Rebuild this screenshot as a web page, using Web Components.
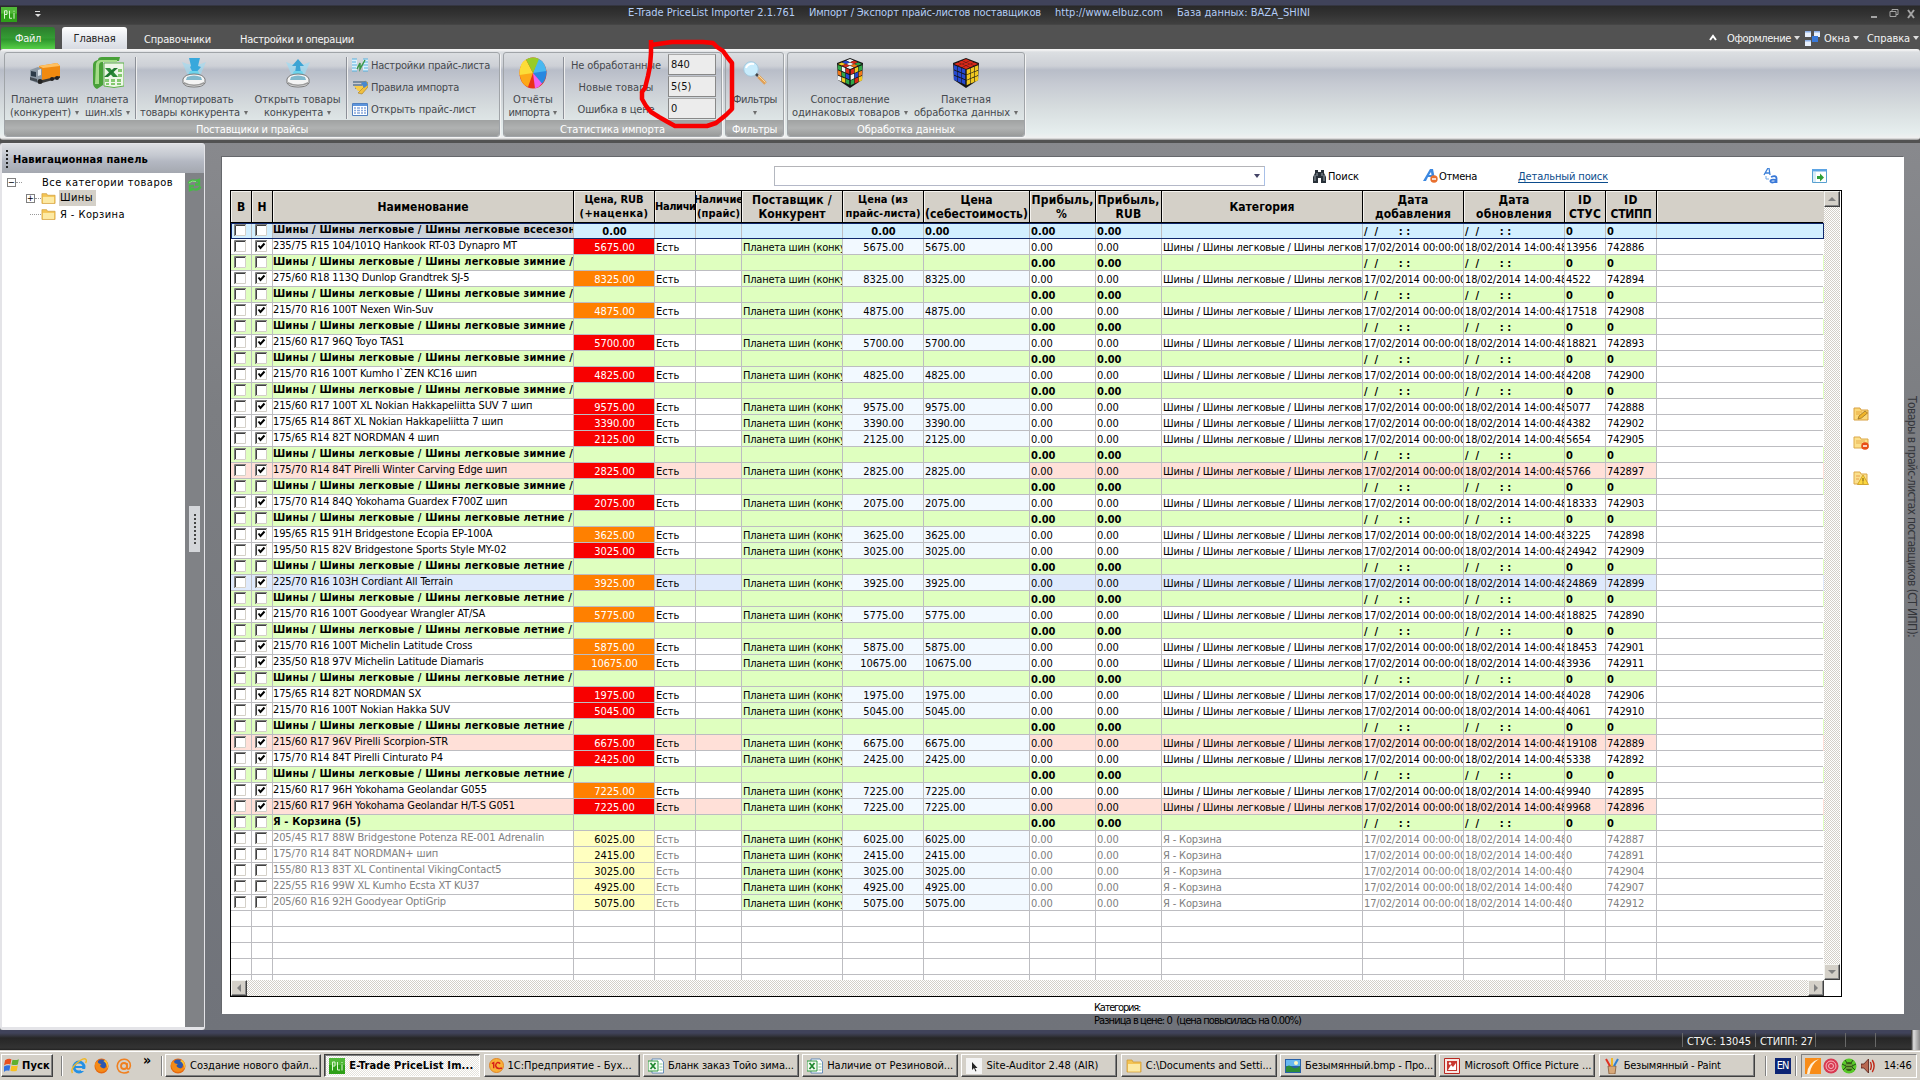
<!DOCTYPE html>
<html lang="ru">
<head>
<meta charset="utf-8">
<title>E-Trade PriceList Importer</title>
<style>
  html, body { margin: 0; height: 100%; overflow: hidden; }
  body {
    font: 11px/13px "DejaVu Sans Condensed", "DejaVu Sans", sans-serif;
    font-stretch: condensed;
    color: #000;
    background: #828488;
  }
</style>
</head>
<body>
<importer-app></importer-app>
<script>
{
  const define = (name, html, setup) => {
    const template = document.createElement('template');
    template.innerHTML = html;
    customElements.define(name, class extends HTMLElement {
      constructor() {
        super();
        this.attachShadow({mode: 'open'});
      }

      connectedCallback() {
        if (this.ready) return;
        this.ready = true;
        if (setup) setup.call(this, template);
        else this.shadowRoot.append(template.content.cloneNode(true));
      }
    });
  };

  // text with an exact width, the difference goes to the letter spacing
  class FitText extends HTMLElement {
    constructor() {
      super();
      this.attachShadow({mode: 'open'});
      this.shadowRoot.innerHTML = `
        <style>:host { display: inline-block; white-space: pre; flex: none; }</style>
        <slot></slot>
      `.trim().replace(/>\s+</g, '><');
    }

    connectedCallback() {
      const w = Number(this.getAttribute('w'));
      const n = this.textContent.length;
      if (!w || !n) return;
      this.style.letterSpacing = '0px';
      const natural = this.getBoundingClientRect().width;
      this.style.letterSpacing = `${((w - natural) / n).toFixed(3)}px`;
    }
  }

  const cube = (faces) => {
    const [top, left, right] = faces;
    let out = '<path d="M14 0L27 5 26 22 14 30 2 22 1 5Z" fill="#151515"/>';
    for (let i = 0; i < 3; i++) {
      for (let j = 0; j < 3; j++) {
        const k = i * 3 + j;
        const tx = 14 + (j - i) * 4.1, ty = 1 + (i + j) * 1.7;
        out += `<path d="M${tx} ${ty}l3.800 1.600-3.800 1.600-3.800-1.600z" fill="${top[k]}"/>`;
        const lx = 1.8 + j * 4, ly = 7 + i * 5.3 + j * 1.6;
        out += `<path d="M${lx} ${ly}l3.500 1.400v4.500l-3.500-1.700z" fill="${left[k]}"/>`;
        const rx = 14.7 + j * 4, ry = 11.8 + i * 5.3 - j * 1.6;
        out += `<path d="M${rx} ${ry}l3.500-1.400v4.500l-3.500 1.700z" fill="${right[k]}"/>`;
      }
    }
    return out;
  };

  const fill = (c) => Array(9).fill(c);
  const R = '#d82818', B = '#2448d0', Y = '#f0c820', G = '#30a848', O = '#f07818', W = '#f0f4f4';
  const folder = '<path d="M1 2h5l1 2h8v10H1z" fill="#f4c454" stroke="#d09c38" stroke-width=".8"/><path d="M2 6h12v7.500H2z" fill="#fdeaa4"/>';
  const excel = '<path d="M4 1h9l2.500 3v11H4z" fill="#fff" stroke="#4878b0" stroke-width=".8"/><path d="M0 3h10v10H0z" fill="#f4fcf0" stroke="#2f9a40"/><path d="M2.500 5l5 6M7.500 5l-5 6" stroke="#208830" stroke-width="1.800"/><path d="M11.500 6h3M11.500 9h3M11.500 12h3" stroke="#8cc890"/>';
  const firefox = '<circle cx="8" cy="8" r="7.500" fill="#e66a10"/><circle cx="8" cy="6.500" r="5" fill="#2c58b0"/><path d="M1 5c0 6 3 9 7 9 4 0 7-3 7-7-1 3-4 4-6 3-3-1-3-3-1-4-3 0-4-1-4-3z" fill="#f58a18"/><path d="M12 2c3 2 4 6 2 9 0-4-1-6-4-8z" fill="#fbc030"/>';
  const pli = '<path d="M0 0h16v16H0z" fill="#2ea018"/><path d="M0 0h16v7H0z" fill="#50b838"/><path d="M3.500 12.500V4H6v4H3.500M8.500 4v8h2.500M13 6.500v6M13 4v1" stroke="#e0f8d8" fill="none"/>';

  const ICONS = {
    pli: [16, 16, pli],
    excel: [16, 16, excel],
    firefox: [16, 16, firefox],
    folder: [16, 16, folder],
    truck: [32, 24, '<path d="M10 5L28 2l3 3v11l-18 4z" fill="#f08a10"/><path d="M10 5l18-3 3 3-17 2z" fill="#ffc060"/><path d="M1 9l8-3 4 2v12l-5 2-7-3z" fill="#8c98a4"/><path d="M2 10l5 1v5l-5-1z" fill="#2c3a48"/><path d="M9 9l3-1v6l-3 1z" fill="#dde4ea"/><path d="M1 16l7 2v3l-7-2z" fill="#444c54"/><path d="M13 19l18-4v2l-18 5z" fill="#383838"/><circle cx="11" cy="20.500" r="2.500" fill="#222"/><circle cx="23" cy="18" r="2" fill="#222"/><circle cx="28" cy="17" r="2" fill="#222"/>'],
    xls: [32, 32, '<path d="M6 3q0-3 4-3h18l-1 4H11v24l-6 4q-4-2-4-6V8q0-4 5-5z" fill="#48a038"/><path d="M4 7q1-4 5-4h16v2H10q-3 0-3 4v18H3z" fill="#a4dc88"/><path d="M12 6h20v23q-10 3-20 0z" fill="#eef6e8" stroke="#5cb048"/><path d="M13 11h5l8 9h-5z" fill="#2c8a38"/><path d="M22 11h4L16 20h-4z" fill="#207830"/><path d="M13 22h4v3h-4zm6 0h4v3h-4zm6 0h4v3h-4zM14 26h3v2h-3zm5 0h4v2h-4zm6 0h4v2h-4zM26 12h4v3h-4zm0 5h4v3h-4z" fill="#84c870"/>'],
    import: [24, 30, '<path d="M0 4q12 6 24 0L18 18H6z" fill="#9cdcf4" opacity=".6"/><path d="M7 0h11l-2 8 3 1-7 8-4-8 1-1z" fill="#38a8dc"/><path d="M8 13h8l3 6H5z" fill="#6cd4ec"/><path d="M1 21q2-5 11-5t11 5v4q-2 4-11 4T1 25z" fill="#f4f4f4" stroke="#787878"/><path d="M5 19q7-3 14 0l1 3H4z" fill="#80b8cc"/><path d="M2 24q10 5 20 0v2q-10 4-20 0z" fill="#9c9c9c"/>'],
    export: [24, 30, '<path d="M0 4q12 6 24 0L18 18H6z" fill="#9cdcf4" opacity=".7"/><path d="M12 1l6 7h-4l1 7H9l1-7H6z" fill="#3ca4d4"/><path d="M8 13h8l3 6H5z" fill="#6cd4ec"/><path d="M1 21q2-5 11-5t11 5v4q-2 4-11 4T1 25z" fill="#f4f4f4" stroke="#787878"/><path d="M5 19q7-3 14 0l1 3H4z" fill="#80b8cc"/><path d="M2 24q10 5 20 0v2q-10 4-20 0z" fill="#9c9c9c"/>'],
    settings: [16, 16, '<path d="M0 2h5v12H0zM11 2h5v12h-5z" fill="#dcf0fc"/><path d="M0 2h5M0 5h4M0 8h5M0 11h4M0 14h5M11 2h5M12 5h4M11 8h5M12 11h4M11 14h5" stroke="#58b0dc"/><path d="M5 12l3-6v6l5-9" stroke="#3a9848" stroke-width="1.500" fill="none"/>'],
    rules: [16, 16, '<path d="M1 3h12M1 6h9M3 9h7" stroke="#607890" stroke-width="1.500"/><path d="M2 7h9l3 3-4 2H6z" fill="#f8cc48"/><path d="M6 14l6-6-2-3 3-3 3 2v4l-6 7z" fill="#f0c040" stroke="#a87c20" stroke-width=".6"/><path d="M9 4l5-2 2 4-4 3z" fill="#4888d0"/>'],
    list: [16, 16, '<path d="M.500 2.500h15v12H.500z" fill="#fff" stroke="#5080c0"/><path d="M1 3h14v2H1z" fill="#5c94dc"/><path d="M2 7h2m1 0h3m1 0h2m1 0h2M2 9.500h2m1 0h3m1 0h2m1 0h2M2 12h2m1 0h3m1 0h2m1 0h2" stroke="#88a8dc" stroke-width="1.300"/>'],
    pie: [28, 32, '<ellipse cx="14" cy="16" rx="13.500" ry="15.500" fill="#e83018"/><path d="M14 16L19 1.500Q27 5 27.500 16z" fill="#48b8f0"/><path d="M14 16L27.500 14q0 9-5 13z" fill="#2888e0"/><path d="M14 16l9 10.500q-3 4-7 5z" fill="#f060f0"/><path d="M14 16L9 30Q1 27 .500 15z" fill="#fca818"/><path d="M14 16L.500 18Q0 6 7 2.500z" fill="#fcdc38"/><path d="M14 16L7 2.500Q13-1 20 2z" fill="#98cc28"/>'],
    lens: [24, 24, '<circle cx="8" cy="8" r="7.300" fill="#c8ecfc" stroke="#a4c8dc"/><path d="M3 7q2-5 8-4" stroke="#fff" stroke-width="2" fill="none"/><path d="M13 13l2 2" stroke="#444" stroke-width="2.500"/><path d="M15.500 15.500l7 7" stroke="#e0a058" stroke-width="3.500"/><path d="M15.500 14.500l7 7" stroke="#fbdc9c"/>'],
    cubeMixed: [28, 30, cube([[W, R, G, B, W, O, Y, R, W], [G, W, R, O, G, B, W, Y, G], [R, Y, G, W, B, O, G, R, Y]])],
    cubeSolved: [28, 30, cube([fill(R), fill(B), fill(Y)])],
    windows: [16, 15, '<path d="M0 0h6v6H0zM9 0h6v6H9zM0 9h6v6H0z" fill="#e8f0fc"/><path d="M7 5h6v6H7z" fill="#3878d8"/><path d="M0 0h6v1.500H0zM9 0h6v1.500H9zM0 9h6v1.500H0z" fill="#8cb0e8"/>'],
    refresh: [15, 14, '<path d="M1.500 5.500Q4 1 9 3l3-1v4.500H8M13.500 8.500Q11 13 6 11l-3 1V8h4" fill="none" stroke="#48b848" stroke-width="2.400"/><path d="M2 5Q5 2 9 3.500" stroke="#90e888" fill="none"/>'],
    find: [13, 13, '<path d="M2 0h3v2h3V0h3v3l2 4v6H8V8H5v5H0V7l2-4z" fill="#283038"/><path d="M2 5v6M4 3v3M9 3v3M11 5v6" stroke="#b4c0c8" stroke-width=".8"/>'],
    cancel: [15, 14, '<path d="M0 12L7 0h3l2 10H9.500L9 8H5l-2 4z" fill="#3c88e0"/><path d="M6 6h2.500L8 3z" fill="#fff"/><circle cx="11" cy="10" r="3.700" fill="#e87030"/><path d="M9 10h4" stroke="#fff" stroke-width="1.500"/>'],
    ab: [15, 16, '<path d="M1 7L5 0h1l1 7M2.500 5h4" stroke="#3c80d8" stroke-width="1.300" fill="none"/><path d="M8 9q5-2 5.500 1v5M13 12q-6-1-5.500 1.500 1 2 5.500 0" fill="none" stroke="#3878d8" stroke-width="1.800"/><path d="M3 8v3h3" stroke="#70a8e8" fill="none"/>'],
    panel: [15, 14, '<path d="M.500 .500h14v13H.500z" fill="#fff" stroke="#58a0d0"/><path d="M0 0h15v2.500H0z" fill="#5ca4e4"/><path d="M1 3h3v10H1z" fill="#d8ecf8"/><path d="M5 7h3V4.500l4 4-4 4V10H5z" fill="#30a038"/>'],
    edit: [16, 14, '<path d="M1 1h6l1 2h7v10H1z" fill="#fbd878" stroke="#d8a040"/><path d="M3 5h6M3 7h4" stroke="#e8a83c"/><path d="M5 12l1-3 6-5 2.500 2-6 5z" fill="#f0b428" stroke="#906820" stroke-width=".7"/>'],
    remove: [16, 14, '<path d="M1 1h6l1 2h7v9H1z" fill="#fbe08c" stroke="#dca848"/><path d="M3 5h9M3 7h6" stroke="#e8b050"/><circle cx="12" cy="10" r="3.800" fill="#e85018"/><path d="M10 10h4" stroke="#fff" stroke-width="1.500"/>'],
    warn: [16, 14, '<path d="M1 1h6l1 2h6v10H1z" fill="#fbe08c" stroke="#dca848"/><path d="M3 5h4M3 8h3" stroke="#e8a050"/><path d="M10 4l5.500 9.500H4.500z" fill="#fcd840" stroke="#c89820" stroke-width=".8"/><path d="M10 7v3.500m0 1v1" stroke="#705010"/>'],
    flag: [16, 16, '<path d="M1 3q3-2 6-1L6 7Q3 6 0 8z" fill="#e85020"/><path d="M8 2.500q3 1 6-.500L13 7q-3 1-6 0z" fill="#60b030"/><path d="M0 9q3-2 6-1l-1 5q-3-1-5 1z" fill="#3070e0"/><path d="M7 8q3 1 6 0l-1 5q-3 1-6 0z" fill="#f8c020"/>'],
    ie: [16, 16, '<circle cx="8" cy="9" r="5" fill="none" stroke="#2490e4" stroke-width="3"/><path d="M4 8h9v2H4z" fill="#2490e4"/><path d="M10 11h6v2h-6z" fill="#d4d0c8"/><path d="M1.500 15Q-1 11 6 5t9-3.500q1 1-.500 3.500" fill="none" stroke="#f0b828" stroke-width="1.500"/>'],
    at: [16, 16, '<circle cx="8" cy="8" r="3" fill="none" stroke="#f08020" stroke-width="1.800"/><path d="M11 5v4q0 3 2.500 1.500Q15 8 14 5 12 1 8 1.200 2 1.500 1.200 8 1.500 14.500 8 15q3 0 5-1.500" fill="none" stroke="#f08020" stroke-width="1.600"/>'],
    onec: [16, 16, '<circle cx="8" cy="8" r="7.500" fill="#f8b038" stroke="#e08020"/><path d="M3 6l2-1v6M12 6q-4-3-5 2 1 4 5 3h2" stroke="#d82018" stroke-width="1.500" fill="none"/>'],
    cursor: [16, 16, '<path d="M0 0h16v16H0z" fill="#f4f4f4"/><path d="M6 4v8l2-2 1.500 3.500 1-.500-1.500-3h2.500z" fill="#222"/>'],
    picture: [16, 16, '<path d="M0 1h16v14H0z" fill="#2860a8"/><path d="M1 2h14v6H1z" fill="#68b8f0"/><path d="M1 14V9q3-3 6 0t8-1v6z" fill="#2c8c38"/><circle cx="11" cy="5" r="2" fill="#fff8c0"/>'],
    manager: [16, 16, '<path d="M.500 .500h15v15H.500z" fill="#f8e8e4" stroke="#b82820"/><path d="M3 3h10v10H3z" fill="#c83830"/><path d="M4 12l3-5 2 2 3-4v7z" fill="#fff"/><circle cx="6" cy="5.500" r="1.200" fill="#fff"/>'],
    paint: [16, 16, '<path d="M4 8h8l-1 8H5z" fill="#d8a878" stroke="#805838" stroke-width=".8"/><path d="M6 8L2 1" stroke="#e03020" stroke-width="2"/><path d="M8 8V0" stroke="#f0b828" stroke-width="2"/><path d="M10 8l4-7" stroke="#3080d0" stroke-width="2"/>'],
    aimp: [16, 16, '<path d="M0 0h16v16H0z" fill="#f88c18"/><path d="M2 16Q3 4 14 1 6 6 4.500 16z" fill="#fff0d8"/>'],
    target: [16, 16, '<circle cx="8" cy="8" r="7.500" fill="#d83850"/><circle cx="8" cy="8" r="5" fill="none" stroke="#f8b8c0"/><circle cx="8" cy="8" r="2.500" fill="none" stroke="#f8b8c0"/>'],
    bug: [16, 16, '<circle cx="8" cy="8" r="7.500" fill="#58c828"/><path d="M1 6l4 2m10-2l-4 2M2 12l3-3m9 3l-3-3M4 2l2 3m6-3l-2 3" stroke="#284818"/><ellipse cx="8" cy="8.500" rx="3.500" ry="4.500" fill="#385818"/><path d="M5 7h6M5 10h6" stroke="#90e050"/>'],
    sound: [16, 16, '<path d="M0 6h3l5-5v14l-5-5H0z" fill="#b86850" stroke="#501810" stroke-width=".8"/><path d="M10 4q2 4 0 8M12 2q4 6 0 12" stroke="#c02818" stroke-width="1.500" fill="none"/>']
  };

  define('app-icon', `
    <style>
      :host { display: block; flex: none; }
      svg { display: block; width: 100%; height: 100%; }
    </style>
  `, function (template) {
    const [w, h, body] = ICONS[this.getAttribute('name')];
    this.shadowRoot.append(template.content.cloneNode(true));
    this.style.width = `${this.getAttribute('w') ?? w}px`;
    this.style.height = `${this.getAttribute('h') ?? h}px`;
    this.shadowRoot.innerHTML += `<svg viewBox="0 0 ${w} ${h}" fill="none" preserveAspectRatio="none">${body}</svg>`;
  });

  define('title-bar', `
    <style>
      :host {
        display: flex; align-items: center; height: 25px; box-sizing: border-box;
        background: linear-gradient(#40435a 0 5px, #292929 6px, #323232 14px, #404040 24px, #4a4a4a);
        color: #b4cdf6;
      }
      app-icon { margin: 3px 0 0 1px; }
      .quick { margin: 3px 0 0 18px; width: 5px; height: 5px; border-top: 1px solid #ddd; }
      .quick::after { content: ""; display: block; margin-top: 2px; border: 3px solid transparent; border-top-color: #ddd; border-bottom: 0; }
      .title { display: flex; margin-left: 588px; }
      .title fit-text { margin-right: 14px; }
      svg { margin: 3px 4px 0 auto; }
    </style>
    <app-icon name="pli" w="16" h="15"></app-icon>
    <span class="quick"></span>
    <div class="title">
      <fit-text w="167">E-Trade PriceList Importer 2.1.761</fit-text>
      <fit-text w="232">Импорт / Экспорт прайс-листов поставщиков</fit-text>
      <fit-text w="108">http://www.elbuz.com</fit-text>
      <fit-text w="133">База данных: BAZA_SHINI</fit-text>
    </div>
    <svg width="46" height="12" fill="none" stroke="#a4a4a4"><path d="M1 9h6" stroke-width="2"/><path d="M20 3.500h6v5h-6zM22 3.500v-2h6v5h-2"/><path d="M38 2l6 8M44 2l-6 8" stroke-width="2"/></svg>
  `);

  define('ribbon-tabs', `
    <style>
      :host { display: flex; height: 24px; background: #525252; color: #f4f4f4; }
      div { display: flex; align-items: center; justify-content: center; height: 22px; margin-top: 2px; }
      div > * { position: relative; }
      .file { width: 54px; margin-left: 1px; border-radius: 3px 3px 0 0; background: linear-gradient(#2c7c2c, #349c34 50%, #2c942c 55%, #58d048); }
      .active { width: 65px; margin-left: 7px; padding-top: 1px; height: 21px; border-radius: 3px 3px 0 0; color: #222; background: linear-gradient(#fff, #eceef2 40%, #d8dbe2); }
      .refs { margin-left: 17px; padding-top: 1px; }
      .ops { margin-left: 29px; padding-top: 1px; }
      .right { margin: 2px 1px 0 auto; height: 22px; }
      i { border: 3px solid transparent; border-top: 4px solid #ddd; border-bottom: 0; }
    </style>
    <div class="file"><fit-text w="26">Файл</fit-text></div>
    <div class="active"><fit-text w="42">Главная</fit-text></div>
    <div class="refs"><fit-text w="67">Справочники</fit-text></div>
    <div class="ops"><fit-text w="114">Настройки и операции</fit-text></div>
    <div class="right">
      <svg width="8" height="8"><path d="M1 6l3-4 3 4" fill="none" stroke="#fff" stroke-width="2"/></svg>
      <fit-text w="64" style="margin-left:10px">Оформление</fit-text><i style="margin:0 5px 0 3px"></i>
      <app-icon name="windows"></app-icon>
      <fit-text w="26" style="margin-left:3px">Окна</fit-text><i style="margin:0 8px 0 3px"></i>
      <fit-text w="43">Справка</fit-text><i style="margin-left:3px"></i>
    </div>
  `);

  define('ribbon-group', `
    <style>
      :host {
        display: flex; flex-direction: column; box-sizing: border-box; height: 85px; flex: none;
        border: 1px solid #a0a4a8; border-radius: 3px; overflow: hidden; box-shadow: 1px 1px 0 #f4f4f4;
        color: #46494e;
      }
      .body { display: flex; height: 68px; }
      .caption { box-sizing: border-box; height: 16px; padding-top: 2px; display: flex; align-items: center; justify-content: center; color: #fff; background: linear-gradient(#a0a2a2, #b0b2b2 50%, #989a9a); }
    </style>
    <div class="body"><slot></slot></div>
    <div class="caption"><slot name="caption"></slot></div>
  `);

  define('ribbon-button', `
    <style>
      :host { display: flex; flex-direction: column; align-items: center; flex: none; }
      .icon { height: 40px; display: flex; align-items: center; }
      .line { height: 13px; display: flex; align-items: center; justify-content: center; white-space: nowrap; }
      i { margin-left: 4px; border: 2.5px solid transparent; border-top: 4px solid #6c6c6c; border-bottom: 0; }
      i.alone { margin: 0; }
    </style>
  `, function (template) {
    const {icon, a, aw, b, bw, width} = this.dataset;
    this.style.width = `${width}px`;
    this.shadowRoot.append(template.content.cloneNode(true));
    this.shadowRoot.innerHTML += `
      <div class="icon"><app-icon name="${icon}"></app-icon></div>
      <div class="line"><fit-text w="${aw}">${a}</fit-text></div>
      <div class="line">${b ? `<fit-text w="${bw}">${b}</fit-text><i></i>` : '<i class="alone"></i>'}</div>
    `;
  });

  define('ribbon-bar', `
    <style>
      :host {
        display: flex; gap: 3px; height: 91px; box-sizing: border-box; padding: 3px 4px; align-items: flex-start;
        border-radius: 3px;
        background: linear-gradient(#f4f4f4 0 1px, #dcdfe2 3px, #cdd0d6 17px, #b8bdc8 21px, #c6cad2 35px, #d6dcde 58px, #e6eeee 84px, #f0f0f0 89px, #909090);
      }
      hr { flex: none; width: 1px; height: 62px; border: 0; margin: 4px 0 0; background: #8c9098; box-shadow: 1px 0 #eee; }
      .rows { display: flex; flex-direction: column; padding: 1px 0 0 5px; }
      .rows > div { display: flex; align-items: center; height: 22px; gap: 3px; }
      .stats { width: 104px; padding: 1px 0 0; align-items: center; }
      .boxes { display: flex; flex-direction: column; gap: 1px; margin-top: 1px; }
      .boxes div { box-sizing: border-box; width: 48px; height: 21px; padding: 3px 0 0 2px; border: 1px solid #888; border-top-color: #aaa; background: #ececec; color: #111; }
    </style>
    <ribbon-group style="width:496px">
      <ribbon-button data-width="79" data-icon="truck" data-a="Планета шин" data-aw="67" data-b="(конкурент)" data-bw="61"></ribbon-button>
      <ribbon-button data-width="47" data-icon="xls" data-a="планета" data-aw="42" data-b="шин.xls" data-bw="37"></ribbon-button>
      <hr style="margin-left:4px">
      <ribbon-button data-width="116" data-icon="import" data-a="Импортировать" data-aw="79" data-b="товары конкурента" data-bw="100"></ribbon-button>
      <ribbon-button data-width="91" data-icon="export" data-a="Открыть товары" data-aw="86" data-b="конкурента" data-bw="59"></ribbon-button>
      <hr style="margin-left:3px">
      <div class="rows">
        <div><app-icon name="settings"></app-icon><fit-text w="119">Настройки прайс-листа</fit-text></div>
        <div><app-icon name="rules"></app-icon><fit-text w="88">Правила импорта</fit-text></div>
        <div><app-icon name="list"></app-icon><fit-text w="105">Открыть прайс-лист</fit-text></div>
      </div>
      <fit-text slot="caption" w="112">Поставщики и прайсы</fit-text>
    </ribbon-group>
    <ribbon-group style="width:219px">
      <ribbon-button data-width="58" data-icon="pie" data-a="Отчёты" data-aw="40" data-b="импорта" data-bw="41"></ribbon-button>
      <hr style="margin-left:1px">
      <div class="rows stats">
        <div><fit-text w="90">Не обработанные</fit-text></div>
        <div><fit-text w="75">Новые товары</fit-text></div>
        <div><fit-text w="77">Ошибка в цене</fit-text></div>
      </div>
      <div class="boxes"><div>840</div><div>5(5)</div><div>0</div></div>
      <fit-text slot="caption" w="105">Статистика импорта</fit-text>
    </ribbon-group>
    <ribbon-group style="width:59px">
      <ribbon-button data-width="58" data-icon="lens" data-a="Фильтры" data-aw="44"></ribbon-button>
      <fit-text slot="caption" w="45">Фильтры</fit-text>
    </ribbon-group>
    <ribbon-group style="width:238px">
      <ribbon-button data-width="124" data-icon="cubeMixed" data-a="Сопоставление" data-aw="79" data-b="одинаковых товаров" data-bw="108"></ribbon-button>
      <ribbon-button data-width="108" data-icon="cubeSolved" data-a="Пакетная" data-aw="50" data-b="обработка данных" data-bw="96"></ribbon-button>
      <fit-text slot="caption" w="98">Обработка данных</fit-text>
    </ribbon-group>
  `);

  define('nav-panel', `
    <style>
      :host {
        display: flex; flex-direction: column; width: 205px; flex: none; box-sizing: border-box;
        border: 1px solid #e4e4e8; border-width: 1px 1px 3px 2px; border-radius: 3px; background: #808286;
      }
      .head {
        display: flex; align-items: center; gap: 5px; height: 29px; box-sizing: border-box; padding: 1px 0 0 4px; font-weight: bold;
        background: linear-gradient(#dcdee2, #c4c8d0 40%, #b4b8c2 60%, #a4a8b0);
      }
      .grip { width: 2px; height: 18px; background: repeating-linear-gradient(#222 0 2px, transparent 2px 4px); }
      .body { display: flex; flex: 1; }
      .tree { width: 183px; background: #fff; padding-top: 1px; box-sizing: border-box; }
      .row { display: flex; align-items: center; height: 16px; }
      .box { width: 7px; height: 7px; border: 1px solid #808080; display: grid; place-items: center; font-size: 9px; line-height: 7px; }
      .dots { border-top: 1px dotted #999; width: 6px; }
      .sel { background: #d4d0c8; padding: 1px 3px 2px 1px; }
      .side app-icon { margin: 5px 0 0 2px; }
      .nub { width: 11px; height: 46px; margin: 314px 0 0 4px; background: #d4d6da; display: grid; place-items: center; }
      .nub::before { content: ""; width: 2px; height: 31px; background: repeating-linear-gradient(#444 0 2px, transparent 2px 4px); }
    </style>
    <div class="head"><span class="grip"></span><fit-text w="135">Навигационная панель</fit-text></div>
    <div class="body">
      <div class="tree">
        <div class="row"><span class="box" style="margin-left:5px">−</span><span class="dots"></span><fit-text w="131" style="margin-left:20px">Все категории товаров</fit-text></div>
        <div class="row"><span class="box" style="margin-left:24px">+</span><span class="dots"></span><app-icon name="folder" w="15" h="13"></app-icon><span class="sel" style="margin-left:3px"><fit-text w="33">Шины</fit-text></span></div>
        <div class="row"><span class="dots" style="margin-left:28px;width:11px"></span><app-icon name="folder" w="15" h="13"></app-icon><fit-text w="65" style="margin-left:4px">Я - Корзина</fit-text></div>
      </div>
      <div class="side"><app-icon name="refresh"></app-icon><div class="nub"></div></div>
    </div>
  `);

  define('search-bar', `
    <style>
      :host { display: flex; align-items: center; height: 33px; padding-top: 5px; box-sizing: border-box; }
      .combo { width: 491px; height: 20px; margin-left: 552px; box-sizing: border-box; border: 1px solid #b4b8c8; border-color: #b4b4b8 #a8c0e8 #b4b8c8 #b4b8c0; display: flex; align-items: center; justify-content: flex-end; padding-right: 4px; }
      i { border: 3px solid transparent; border-top: 4px solid #446; border-bottom: 0; }
      .link { height: 12px; border-bottom: 1px solid #0c4c8c; color: #0c4c8c; }
      .text { padding-top: 1px; }
    </style>
    <div class="combo"><i></i></div>
    <app-icon name="find" style="margin-left:48px"></app-icon><fit-text class="text" w="31" style="margin-left:2px">Поиск</fit-text>
    <app-icon name="cancel" style="margin-left:64px"></app-icon><fit-text class="text" w="38" style="margin-left:1px">Отмена</fit-text>
    <fit-text class="link" w="90" style="margin-left:41px">Детальный поиск</fit-text>
    <app-icon name="ab" style="margin-left:155px"></app-icon>
    <app-icon name="panel" style="margin-left:34px"></app-icon>
  `);

  define('scroll-bar', `
    <style>
      :host {
        display: flex; justify-content: space-between; flex: none;
        background: conic-gradient(#d4d0c8 25%, #fff 0 50%, #d4d0c8 0 75%, #fff 0) 0 0 / 2px 2px;
      }
      b { box-sizing: border-box; width: 16px; height: 16px; background: #d4d0c8; border: 1px solid; border-color: #f4f4f0 #404040 #404040 #f4f4f0; box-shadow: inset -1px -1px #888; display: grid; place-items: center; }
      path { fill: #808080; }
    </style>
  `, function (template) {
    this.shadowRoot.append(template.content.cloneNode(true));
    const arrow = (d) => `<b><svg width="8" height="8"><path d="${d}"/></svg></b>`;
    this.shadowRoot.innerHTML += this.hasAttribute('vertical')
      ? arrow('M0 6h8L4 2z') + arrow('M0 2h8L4 6z')
      : arrow('M6 0v8L2 4z') + arrow('M2 0v8l4-4z');
  });

  // column width, font size, caption lines with widths
  const COLUMNS = [
    [21, 12, ['В', 8]],
    [21, 12, ['Н', 9]],
    [301, 12, ['Наименование', 91]],
    [81, 11, ['Цена, RUB', 59], ['(+наценка)', 69]],
    [41, 11, ['Наличие', 47]],
    [46, 11, ['Наличие', 49], ['(прайс)', 43]],
    [101, 12, ['Поставщик /', 80], ['Конкурент', 67]],
    [81, 11, ['Цена (из', 50], ['прайс-листа)', 75]],
    [106, 12, ['Цена', 32], ['(себестоимость)', 103]],
    [66, 12, ['Прибыль,', 62], ['%', 13]],
    [66, 12, ['Прибыль,', 62], ['RUB', 26]],
    [201, 12, ['Категория', 65]],
    [101, 12, ['Дата', 31], ['добавления', 76]],
    [101, 12, ['Дата', 31], ['обновления', 76]],
    [41, 12, ['ID', 14], ['СТУС', 32]],
    [51, 12, ['ID', 14], ['СТИПП', 41]],
    [166, 12]
  ];

  const WINTER = 'Шины / Шины легковые / Шины легковые зимние /';
  const SUMMER = 'Шины / Шины легковые / Шины легковые летние /';
  // group rows are plain strings, goods are [name, price, id, id2, price colour, row colour]
  const ROWS = [
    'Шины / Шины легковые / Шины легковые всесезонные',
    ['235/75 R15 104/101Q Hankook RT-03 Dynapro MT', 5675, 13956, 742886, 'red'],
    WINTER,
    ['275/60 R18 113Q Dunlop Grandtrek SJ-5', 8325, 4522, 742894, 'orange'],
    WINTER,
    ['215/70 R16 100T Nexen Win-Suv', 4875, 17518, 742908, 'orange'],
    WINTER,
    ['215/60 R17 96Q Toyo TAS1', 5700, 18821, 742893, 'red'],
    WINTER,
    ['215/70 R16 100T Kumho I`ZEN KC16 шип', 4825, 4208, 742900, 'red'],
    WINTER,
    ['215/60 R17 100T XL Nokian Hakkapeliitta SUV 7 шип', 9575, 5077, 742888, 'red'],
    ['175/65 R14 86T XL Nokian Hakkapeliitta 7 шип', 3390, 4382, 742902, 'red'],
    ['175/65 R14 82T NORDMAN 4 шип', 2125, 5654, 742905, 'red'],
    WINTER,
    ['175/70 R14 84T Pirelli Winter Carving Edge шип', 2825, 5766, 742897, 'red', 'pink'],
    WINTER,
    ['175/70 R14 84Q Yokohama Guardex F700Z шип', 2075, 18333, 742903, 'red'],
    SUMMER,
    ['195/65 R15 91H Bridgestone Ecopia EP-100A', 3625, 3225, 742898, 'orange'],
    ['195/50 R15 82V Bridgestone Sports Style MY-02', 3025, 24942, 742909, 'red'],
    SUMMER,
    ['225/70 R16 103H Cordiant All Terrain', 3925, 24869, 742899, 'orange', 'blue'],
    SUMMER,
    ['215/70 R16 100T Goodyear Wrangler AT/SA', 5775, 18825, 742890, 'orange'],
    SUMMER,
    ['215/70 R16 100T Michelin Latitude Cross', 5875, 18453, 742901, 'orange'],
    ['235/50 R18 97V Michelin Latitude Diamaris', 10675, 3936, 742911, 'orange'],
    SUMMER,
    ['175/65 R14 82T NORDMAN SX', 1975, 4028, 742906, 'red'],
    ['215/70 R16 100T Nokian Hakka SUV', 5045, 4061, 742910, 'red'],
    SUMMER,
    ['215/60 R17 96V Pirelli Scorpion-STR', 6675, 19108, 742889, 'red', 'pink'],
    ['175/70 R14 84T Pirelli Cinturato P4', 2425, 5338, 742892, 'red'],
    SUMMER,
    ['215/60 R17 96H Yokohama Geolandar G055', 7225, 9940, 742895, 'orange'],
    ['215/60 R17 96H Yokohama Geolandar H/T-S G051', 7225, 9968, 742896, 'red', 'pink'],
    'Я - Корзина (5)',
    ['205/45 R17 88W Bridgestone Potenza RE-001 Adrenalin', 6025, 0, 742887, 'yellow', 'bin'],
    ['175/70 R14 84T NORDMAN+ шип', 2415, 0, 742891, 'yellow', 'bin'],
    ['155/80 R13 83T XL Continental VikingContact5', 3025, 0, 742904, 'yellow', 'bin'],
    ['225/55 R16 99W XL Kumho Ecsta XT KU37', 4925, 0, 742907, 'yellow', 'bin'],
    ['205/60 R16 92H Goodyear OptiGrip', 5075, 0, 742912, 'yellow', 'bin']
  ];

  // letter spacing that gives a sample string its width
  const ctx = document.createElement('canvas').getContext('2d');
  const spacing = (text, width, weight = '') => {
    ctx.font = `${weight} 11px "DejaVu Sans Condensed", "DejaVu Sans"`;
    return `${((width - ctx.measureText(text).width) / text.length).toFixed(3)}px`;
  };

  define('price-grid', `
    <style>
      :host { display: flex; flex-direction: column; box-sizing: border-box; width: 1612px; height: 807px; border: 1px solid #000; margin-left: 8px; background: #fff; }
      .main { display: flex; height: 789px; }
      .table { width: 1593px; overflow: hidden; }
      .r { display: grid; grid-template-columns: ${COLUMNS.map((c) => `${c[0]}px`).join(' ')}; height: 16px; }
      .r > * { box-sizing: border-box; overflow: hidden; white-space: pre; border-right: 1px solid #bdbdc1; border-bottom: 1px solid #bdbdc1; padding: 1px 0 0 1px; line-height: 15px; }
      .r > :last-child { border-right: 0; background: #fff; }
      .head { height: 32px; font-weight: bold; background: #d4d0c8; }
      .head > * { border-color: #000; display: flex; flex-direction: column; align-items: center; justify-content: center; line-height: 14px; padding: 0; box-shadow: inset 1px 1px #f4f2ee; }
      .head > :last-child { background: #d4d0c8; }
      .head > :nth-child(5) { align-items: flex-start; }
      .head > :nth-child(n+9) { padding-top: 1px; }
      .r > .c { padding: 1px 0 0 3px; }
      .c svg { display: block; }
      .r > .n { line-height: 13px; padding: 0; letter-spacing: var(--name); }
      .p { text-align: center; letter-spacing: var(--num); }
      .m { letter-spacing: var(--num); }
      .s { letter-spacing: var(--partner); background: #e0ffc8; }
      .k { letter-spacing: var(--cat); }
      .d { letter-spacing: var(--date); }
      .cost { background: #f2f9ff; }
      .g { background: #dfffbf; font-weight: bold; }
      .r.g > .n { letter-spacing: var(--group); }
      .g .m, .g .p { letter-spacing: 0; }
      .g.sel, .g.sel > :last-child { background: #d2efff; }
      .g.sel { outline: 1px solid #10286c; outline-offset: -1px; }
      .sel .n { background: #ccd3da; }
      .pink { background: #ffe0d8; }
      .blue { background: #dfeafc; }
      .bin .n, .bin .e, .bin .m, .bin .k, .bin .d { color: #808080; }
      .bin .cost { color: #000; }
      .red { background: #f80000; color: #fff; }
      .orange { background: #ff8000; color: #fff; }
      .yellow { background: #ffffc0; }
      .bottom { display: flex; height: 16px; }
      .bottom scroll-bar { width: 1593px; }
      .main scroll-bar { width: 16px; flex-direction: column; }
    </style>
    <div class="main">
      <div class="table"></div>
      <scroll-bar vertical></scroll-bar>
    </div>
    <div class="bottom"><scroll-bar></scroll-bar></div>
  `, function (template) {
    const root = this.shadowRoot;
    root.append(template.content.cloneNode(true));
    const vars = {
      name: spacing('235/75 R15 104/101Q Hankook RT-03 Dynapro MT', 244),
      num: spacing('5675.00', 40.3),
      partner: spacing('Планета шин (конк', 97),
      cat: spacing('Шины / Шины легковые / Шины легков', 199),
      date: spacing('17/02/2014 00:00:0', 96),
      group: spacing(WINTER, 300, 'bold')
    };
    for (const key in vars) this.style.setProperty(`--${key}`, vars[key]);

    const check = (on) => `<div class="c"><svg width="12" height="13"><path d="M0 0h12v12H0z" fill="#fff"/><path d="M.500 12V.500H12" stroke="#808080" fill="none"/><path d="M1.500 11V1.500H11" stroke="#404040" fill="none"/><path d="M1 11.500h10.500V1" stroke="#d4d0c8" fill="none"/>${on ? '<path d="M3.500 5.500l2 2.500 4-4.500" stroke="#000" stroke-width="2" fill="none"/>' : ''}</svg></div>`;

    const head = COLUMNS.map(([, size, ...lines]) =>
      `<div style="font-size:${size}px">${lines.map(([text, w]) => `<fit-text w="${w}">${text}</fit-text>`).join('')}</div>`).join('');

    const rows = ROWS.map((row, i) => {
      if (typeof row === 'string') {
        const first = i === 0;
        const zero = first ? '0.00' : '';
        return `<div class="r g ${first ? 'sel' : ''}">${check()}${check()}<div class="n">${row}</div>
          <div class="p">${zero}</div><div></div><div></div><div></div><div class="p">${zero}</div><div class="m">${zero}</div>
          <div class="m">0.00</div><div class="m">0.00</div><div></div><div>/  /      : :</div><div>/  /      : :</div><div>0</div><div>0</div><div></div></div>`;
      }
      const [name, price, id, id2, color, cls = ''] = row;
      const bin = cls === 'bin';
      const money = price.toFixed(2);
      return `<div class="r ${cls}">${check()}${check(!bin)}<div class="n">${name}</div>
        <div class="p ${color}">${money}</div><div class="e">Есть</div><div></div><div class="s">Планета шин (конкурент)</div>
        <div class="p cost">${money}</div><div class="m cost">${money}</div><div class="m">0.00</div><div class="m">0.00</div>
        <div class="k">${bin ? 'Я - Корзина' : 'Шины / Шины легковые / Шины легковые'}</div>
        <div class="d">17/02/2014 00:00:00</div><div class="d">18/02/2014 14:00:48</div><div class="m">${id}</div><div class="m">${id2}</div><div></div></div>`;
    });
    const empty = `<div class="r">${'<div></div>'.repeat(17)}</div>`.repeat(5);
    root.querySelector('.table').innerHTML = `<div class="r head">${head}</div>${rows.join('')}${empty}`;
  });

  define('work-area', `
    <style>
      :host { display: flex; flex-direction: column; flex: 1; min-width: 0; padding-top: 14px; background: linear-gradient(#88898d, #7c7e82 30%, #70737a); }
      .row { display: flex; height: 857px; }
      .sheet { width: 1682px; margin-left: 17px; background: #fff; box-sizing: border-box; box-shadow: -1px -1px #66686c; flex: none; }
      .grid { display: flex; }
      .tools { padding: 217px 0 0 11px; }
      .tools app-icon { margin-bottom: 15px; }
      .tools app-icon + app-icon + app-icon { margin-top: 21px; }
      .side { width: 16px; padding-top: 239px; box-sizing: border-box; writing-mode: vertical-rl; color: #33353a; font-size: 12px; line-height: 16px; white-space: nowrap; }
      .note { padding: 5px 0 0 872px; }
      .diff { padding: 1px 0 0 889px; }
      .note, .diff { line-height: 12px; }
    </style>
    <div class="row">
      <div class="sheet">
        <search-bar></search-bar>
        <div class="grid">
          <price-grid></price-grid>
          <div class="tools"><app-icon name="edit"></app-icon><app-icon name="remove"></app-icon><app-icon name="warn"></app-icon></div>
        </div>
        <div class="note"><fit-text w="46">Категория:</fit-text></div>
      </div>
      <div class="side">Товары в прайс-листах поставщиков (СТ ИПП):</div>
    </div>
    <div class="diff"><fit-text w="207">Разница в цене: 0  (цена повысилась на 0.00%)</fit-text></div>
  `, function (template) {
    this.shadowRoot.append(template.content.cloneNode(true));
    const side = this.shadowRoot.querySelector('.side');
    ctx.font = '12px "DejaVu Sans Condensed", "DejaVu Sans"';
    side.style.letterSpacing = `${(241 - ctx.measureText(side.textContent).width) / side.textContent.length}px`;
  });

  define('status-bar', `
    <style>
      :host { display: flex; justify-content: flex-end; height: 20px; color: #f4f4f4; background: linear-gradient(#40435a 0 3px, #33343c 6px, #262626 8px, #333 18px, #222); }
      div { box-sizing: border-box; height: 14px; margin-top: 3px; border-left: 1px solid #686868; padding: 2px 0 0 4px; }
      b { width: 9px; background: linear-gradient(90deg, #222, #ddd 30%, #888); }
    </style>
    <div style="width:73px"><fit-text w="64">СТУС: 13045</fit-text></div>
    <div style="width:60px"><fit-text w="53">СТИПП: 27</fit-text></div>
    <div style="width:30px"></div><div style="width:30px"></div><div style="width:36px"></div><b></b>
  `);

  define('task-button', `
    <style>
      :host {
        display: flex; align-items: center; gap: 4px; box-sizing: border-box; width: 156px; height: 23px; padding: 0 0 0 4px; flex: none;
        border: 1px solid; border-color: #fff #404040 #404040 #fff; box-shadow: inset -1px -1px #808080; background: #d4d0c8;
      }
      :host([active]) {
        font-weight: bold; border-color: #404040 #fff #fff #404040; box-shadow: inset 1px 1px #808080;
        background: conic-gradient(#e4e2dc 25%, #fff 0 50%, #e4e2dc 0 75%, #fff 0) 0 0 / 2px 2px;
      }
    </style>
    <slot></slot>
  `);

  define('task-bar', `
    <style>
      :host { display: flex; align-items: center; height: 30px; box-sizing: border-box; padding: 0 2px 0 1px; background: #d4d0c8; border-top: 1px solid #d4d0c8; box-shadow: inset 0 1px #fff; }
      hr { width: 1px; height: 20px; margin: 0; border: 0; background: #808080; box-shadow: 1px 0 #fff; flex: none; }
      .tasks { display: flex; gap: 3.3px; margin-left: 3px; }
      .start { width: 52px; font-weight: bold; gap: 1px; padding-left: 2px; }
      .lang { background: #0c2474; color: #fff; width: 16px; height: 16px; line-height: 16px; text-align: center; margin-left: 9px; }
      .tray { display: flex; align-items: center; gap: 2px; box-sizing: border-box; width: 116px; height: 24px; margin-left: 5px; padding-left: 3px; border: 1px solid; border-color: #808080 #fff #fff #808080; }
    </style>
    <task-button class="start"><app-icon name="flag" w="17" h="17"></app-icon><fit-text w="28">Пуск</fit-text></task-button>
    <hr style="margin-left:8px">
    <app-icon name="ie" style="margin-left:9px"></app-icon>
    <app-icon name="firefox" w="15" style="margin-left:7px"></app-icon>
    <app-icon name="at" style="margin-left:7px"></app-icon>
    <fit-text w="9" style="margin:-10px 0 0 11px;font-size:14px;font-weight:bold">»</fit-text>
    <hr style="margin-left:9px">
    <div class="tasks">
      <task-button><app-icon name="firefox"></app-icon><fit-text w="128">Создание нового файл...</fit-text></task-button>
      <task-button active><app-icon name="pli"></app-icon><fit-text w="124">E-Trade PriceList Im...</fit-text></task-button>
      <task-button><app-icon name="onec" w="15" h="15"></app-icon><fit-text w="124">1С:Предприятие - Бух...</fit-text></task-button>
      <task-button><app-icon name="excel"></app-icon><fit-text w="126">Бланк заказ Тойо зима...</fit-text></task-button>
      <task-button><app-icon name="excel"></app-icon><fit-text w="126">Наличие от Резиновой...</fit-text></task-button>
      <task-button><app-icon name="cursor"></app-icon><fit-text w="112">Site-Auditor 2.48 (AIR)</fit-text></task-button>
      <task-button><app-icon name="folder"></app-icon><fit-text w="126">C:\\Documents and Setti...</fit-text></task-button>
      <task-button><app-icon name="picture"></app-icon><fit-text w="128">Безымянный.bmp - Про...</fit-text></task-button>
      <task-button><app-icon name="manager"></app-icon><fit-text w="127">Microsoft Office Picture ...</fit-text></task-button>
      <task-button><app-icon name="paint"></app-icon><fit-text w="97">Безымянный - Paint</fit-text></task-button>
    </div>
    <hr style="margin-left:10px">
    <div class="lang"><fit-text w="12">EN</fit-text></div>
    <hr style="margin-left:4px">
    <div class="tray">
      <app-icon name="aimp"></app-icon><app-icon name="target"></app-icon><app-icon name="bug"></app-icon><app-icon name="sound" w="15" style="margin-left:2px"></app-icon>
      <fit-text w="28" style="margin-left:6px">14:46</fit-text>
    </div>
  `);

  // hand drawn outline over the statistics boxes
  define('red-mark', `
    <style>
      :host { position: absolute; left: 636px; top: 36px; width: 104px; height: 96px; }
      svg { display: block; }
    </style>
    <svg width="104" height="96" fill="none" stroke="#f80000" stroke-width="4.500" stroke-linejoin="round">
      <path d="M15 4v13l-1 13-2 10-3 12-3 4v7l4 7 5 6 8 5 7 4 9 5h32l9-3 10-8 6-6V27l-4-5-5-7-6-4-4-4-10-1H36l-21 3"/>
    </svg>
  `);

  define('importer-app', `
    <style>
      :host { display: flex; flex-direction: column; width: 1920px; height: 1080px; background: #525252; }
      .body { display: flex; height: 887px; margin-top: 3px; background: #737579; }
    </style>
    <title-bar></title-bar>
    <ribbon-tabs></ribbon-tabs>
    <ribbon-bar></ribbon-bar>
    <div class="body">
      <nav-panel></nav-panel>
      <work-area></work-area>
    </div>
    <status-bar></status-bar>
    <task-bar></task-bar>
    <red-mark></red-mark>
  `);

  customElements.define('fit-text', FitText);
}
</script>
</body>
</html>
